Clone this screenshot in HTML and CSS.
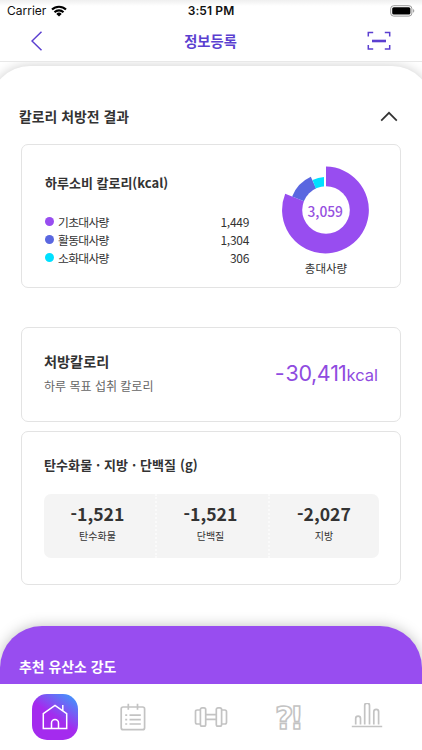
FILE: index.html
```html
<!DOCTYPE html>
<html lang="ko">
<head>
    <meta charset="UTF-8">
    <meta name="viewport" content="width=device-width, initial-scale=1.0">
    <title>정보등록</title>
    <link rel="stylesheet" href="styles.css">
</head>
<body>

    <div class="app">
        <header class="header">
            <div class="status">
                <div class="carrier">
                    <span>Carrier</span>
                    <svg width="16" height="12" viewBox="0 0 16 12">
                        <path d="M1 4.6a10 10 0 0 1 14 0M3.5 7.2a6.4 6.4 0 0 1 9 0" fill="none" stroke="#000" stroke-width="2.1"/>
                        <path d="M8 11.6L5.3 8.9a3.9 3.9 0 0 1 5.4 0z"/>
                    </svg>
                </div>
                <div class="time">3:51 PM</div>
                <div class="battery">
                    <svg width="25" height="12" viewBox="0 0 25 12">
                        <rect x=".7" y=".7" width="21.2" height="10.4" rx="3" fill="none" stroke="#999"/>
                        <rect x="2.2" y="2.2" width="18.2" height="7.4" rx="1.6"/>
                        <path d="M23.1 4.1c1.6.5 1.6 3.1 0 3.6z" fill="#999"/>
                    </svg>
                </div>
            </div>
            <div class="titlebar">
                <svg width="12" height="20" viewBox="0 0 12 20">
                    <path d="M10.5 .8L1 10l9.5 9.2" fill="none" stroke="#5b3fd0" stroke-width="1.5"/>
                </svg>
                <h1>정보등록</h1>
                <svg width="24" height="20" viewBox="0 0 24 20">
                    <path d="M1.3 5.5V1.4h4.9M17.8 1.4h4.9v4.1M1.3 14v4.1h4.9M17.8 18.1h4.9V14" fill="none" stroke="#5b3fd0" stroke-width="1.5"/>
                    <path d="M5 10h14" stroke="#5b3fd0" stroke-width="2.6"/>
                </svg>
            </div>
        </header>

        <main class="sheet">
            <div class="section-title">
                <h2>칼로리 처방전 결과</h2>
                <svg width="18" height="11" viewBox="0 0 18 11">
                    <path d="M1.2 9.7L9 1.8l7.8 7.9" fill="none" stroke="#333" stroke-width="1.7"/>
                </svg>
            </div>

            <section class="card daily">
                <div class="daily-list">
                    <h3>하루소비 칼로리(kcal)</h3>
                    <ul>
                        <li><i class="dot purple"></i><span>기초대사량</span><b>1,449</b></li>
                        <li><i class="dot blue"></i><span>활동대사량</span><b>1,304</b></li>
                        <li><i class="dot cyan"></i><span>소화대사량</span><b>306</b></li>
                    </ul>
                </div>
                <div class="chart">
                    <svg width="88" height="88" viewBox="-44 -44 88 88">
                        <path d="M0 0V-43.4A43.4 43.4 0 1 1 -40.8 -16.2z" fill="#984df0"/>
                        <path d="M0 0L-33.9 -13.5A36.5 36.5 0 0 1 -15.2 -33.2z" fill="#5a67e0"/>
                        <path d="M-1.8 0V-33A33 33 0 0 0 -13.5 -30.1z" fill="#00e0ff"/>
                        <circle r="23.8" fill="#fff"/>
                        <path d="M-1 -20V-44" stroke="#fff" stroke-width="2"/>
                        <text x="-.8" y="6.5" text-anchor="middle" class="total">3,059</text>
                    </svg>
                    <p>총대사량</p>
                </div>
            </section>

            <section class="card target">
                <div>
                    <h3>처방칼로리</h3>
                    <p>하루 목표 섭취 칼로리</p>
                </div>
                <div class="kcal"><span class="minus">-</span><span class="number">30,4</span><span class="ones">11</span><small>kcal</small></div>
            </section>

            <section class="card macros">
                <h3>탄수화물 · 지방 · 단백질 (g)</h3>
                <div class="macro-box">
                    <div><strong>-1,521</strong><span>탄수화물</span></div>
                    <div><strong>-1,521</strong><span>단백질</span></div>
                    <div><strong>-2,027</strong><span>지방</span></div>
                </div>
            </section>
        </main>

        <section class="cardio">
            <h2>추천 유산소 강도</h2>
        </section>

        <nav class="tabs">
            <a class="home">
                <svg width="28" height="28" viewBox="0 0 28 28" fill="none" stroke="#fff" stroke-width="1.5">
                    <path d="M2.3 10.6L14 2.3l11.7 8.3v15H2.3zM21.8 7.5V2M10.5 25.4v-5.3a3.5 3.5 0 0 1 7 0v5.3"/>
                </svg>
            </a>
            <a>
                <svg width="26" height="28" viewBox="0 0 26 28" fill="none" stroke="#c3c3c3" stroke-width="1.7">
                    <rect x="1.2" y="4" width="23.4" height="22.7" rx="2"/>
                    <path d="M8.3 .8v6M17.5 .8v6M5.2 12.2h2M5.2 16.7h2M5.2 21h2M9.5 12.2h11.3M9.5 16.7h11.3M9.5 21h11.3"/>
                </svg>
            </a>
            <a>
                <svg width="34" height="22" viewBox="0 0 34 22" fill="none" stroke="#c3c3c3" stroke-width="1.7">
                    <rect x="6.4" y="1.8" width="5.3" height="18.4" rx="1.7"/>
                    <rect x="22.3" y="1.8" width="5.3" height="18.4" rx="1.7"/>
                    <path d="M6.4 4H3.2q-1.7 0-1.7 1.7v10.6q0 1.7 1.7 1.7h3.2M27.6 4h3.2q1.7 0 1.7 1.7v10.6q0 1.7-1.7 1.7h-3.2M11.7 8.7h10.6M11.7 13.3h10.6"/>
                </svg>
            </a>
            <a>
                <svg width="40" height="40" viewBox="0 0 40 40">
                    <text x="6" y="32" class="help">?!</text>
                </svg>
            </a>
            <a>
                <svg width="32" height="28" viewBox="0 0 32 28" fill="none" stroke="#c3c3c3" stroke-width="1.7">
                    <path d="M.8 23.5h30.4M4.7 21.5v-6a2.4 2.4 0 0 1 4.8 0v6M13.7 21.5V2.5a2.4 2.4 0 0 1 4.8 0v19M22.8 21.5V8.7a2.4 2.4 0 0 1 4.8 0v12.8"/>
                </svg>
            </a>
        </nav>
    </div>

</body>
</html>
```
FILE: styles.css
```css
* {
    box-sizing: border-box;
}
body {
    margin: 0;
    font-family: "Noto Sans CJK KR", sans-serif;
    color: #333;
    background: #fff;
}
h1, h2, h3, p, ul {
    margin: 0;
    padding: 0;
}
svg {
    display: block;
    flex: none;
}
.app {
    height: 750px;
    display: flex;
    flex-direction: column;
    overflow: hidden;
}
.header {
    position: relative;
    z-index: 1;
    height: 62px;
    flex: none;
    background: linear-gradient(#efefef, #fff 6px);
    border-bottom: 1px solid #e8e8e8;
}
.status {
    display: grid;
    grid-template-columns: 1fr auto 1fr;
    align-items: center;
    height: 22px;
    padding: 0 7px 0 7px;
    font: 12px/22px Inter, sans-serif;
    color: #111;
}
.carrier {
    display: flex;
    align-items: center;
    gap: 5px;
}
.time {
    font-weight: 600;
    letter-spacing: 0.1px;
}
.battery {
    justify-self: end;
}
.titlebar {
    display: flex;
    justify-content: space-between;
    align-items: center;
    height: 38px;
    padding: 0 31px 0 31px;
}
.titlebar h1 {
    font-size: 14.3px;
    font-weight: 700;
    line-height: 22px;
    padding-left: 11px;
    color: #5b3fd0;
}
.sheet {
    flex: none;
    height: 680px;
    margin: 4px -10px -120px;
    padding: 39px 31px 0;
    border-radius: 40px 40px 0 0;
    background: #fff;
    box-shadow: 0 0 12px rgba(0, 0, 0, 0.2);
}
.section-title {
    display: flex;
    justify-content: space-between;
    align-items: center;
    height: 22px;
    margin: 0 3px 17px -2px;
}
h2 {
    font-size: 13.9px;
    font-weight: 700;
    line-height: 22px;
}
h3 {
    font-size: 13px;
    font-weight: 700;
    line-height: 20px;
}
.card {
    border: 1px solid #e3e3e3;
    border-radius: 7px;
    width: 380px;
}
.daily {
    display: flex;
    height: 144px;
    padding: 21px 29px 0 23px;
    margin-bottom: 39px;
}
.daily-list {
    width: 204px;
    padding-top: 7px;
}
.daily ul {
    list-style: none;
    margin-top: 19px;
}
.daily li {
    display: flex;
    align-items: center;
    height: 18.4px;
    font-size: 12px;
}
.daily li span {
    font-size: 11.8px;
    letter-spacing: -0.7px;
}
.daily li b {
    margin-left: auto;
    font-weight: 400;
    letter-spacing: -0.3px;
}
.dot {
    width: 9px;
    height: 9px;
    margin-right: 4px;
    border-radius: 50%;
}
.purple {
    background: #984df0;
}
.blue {
    background: #5a67e0;
}
.cyan {
    background: #00e0ff;
}
.chart {
    margin-left: 33px;
    text-align: center;
}
.chart p {
    font-size: 11.5px;
    line-height: 18px;
    margin-top: 5px;
}
.total {
    font-size: 13.8px;
    font-weight: 500;
    fill: #9650e0;
}
.target {
    display: flex;
    justify-content: space-between;
    height: 95px;
    padding: 22px 22px 0;
    margin-bottom: 9px;
}
.target h3 {
    font-size: 14.2px;
    line-height: 22px;
}
.target p {
    font-size: 12px;
    line-height: 18px;
    margin-top: 5px;
    color: #666;
}
.kcal {
    display: flex;
    align-items: baseline;
    height: 32px;
    margin-top: 7px;
    font-family: Inter, sans-serif;
    font-size: 21.5px;
    font-weight: 400;
    line-height: 32px;
    color: #8f4be0;
}
.minus {
    letter-spacing: 1px;
}
.number {
    letter-spacing: -0.4px;
}
.ones {
    letter-spacing: -1.2px;
}
.kcal small {
    font-size: 16.5px;
    margin-left: 1px;
}
.macros {
    height: 154px;
    padding: 23px 21px 0 22px;
}
.macros h3 {
    letter-spacing: 0.1px;
}
.macro-box {
    display: grid;
    grid-template-columns: 111px 113px 111px;
    height: 64px;
    margin-top: 19px;
    border-radius: 7px;
    background: #f4f4f4;
}
.macro-box div {
    display: flex;
    flex-direction: column;
    align-items: center;
    padding: 8px 4px 0 0;
}
.macro-box div + div {
    border-left: 2px dotted #fafafa;
}
.macro-box div:last-child {
    padding-right: 1px;
}
.macro-box strong {
    font-size: 17.6px;
    font-weight: 700;
    line-height: 24px;
}
.macro-box span {
    font-size: 10px;
    line-height: 16px;
    margin-top: 2px;
}
.cardio {
    position: relative;
    flex: none;
    height: 58px;
    padding: 29px 19px 0;
    border-radius: 42px 42px 0 0;
    background: #984df0;
    box-shadow: 0 0 14px rgba(0, 0, 0, 0.25);
    color: #fff;
}
.tabs {
    position: relative;
    flex: none;
    display: grid;
    grid-template-columns: repeat(5, 78.2px);
    justify-content: center;
    height: 66px;
    padding-top: 10px;
    background: #fff;
}
.tabs a {
    display: flex;
    align-items: center;
    justify-content: center;
    height: 46px;
}
.tabs .home {
    width: 46px;
    margin-left: 16px;
    border-radius: 15px;
    background: linear-gradient(35deg, #a42bee 50%, #4a8cfa 90%);
}
.help {
    font: bold 32px "DejaVu Sans", sans-serif;
    letter-spacing: -4px;
    fill: #fff;
    stroke: #c3c3c3;
    stroke-width: 1.6px;
}
```
